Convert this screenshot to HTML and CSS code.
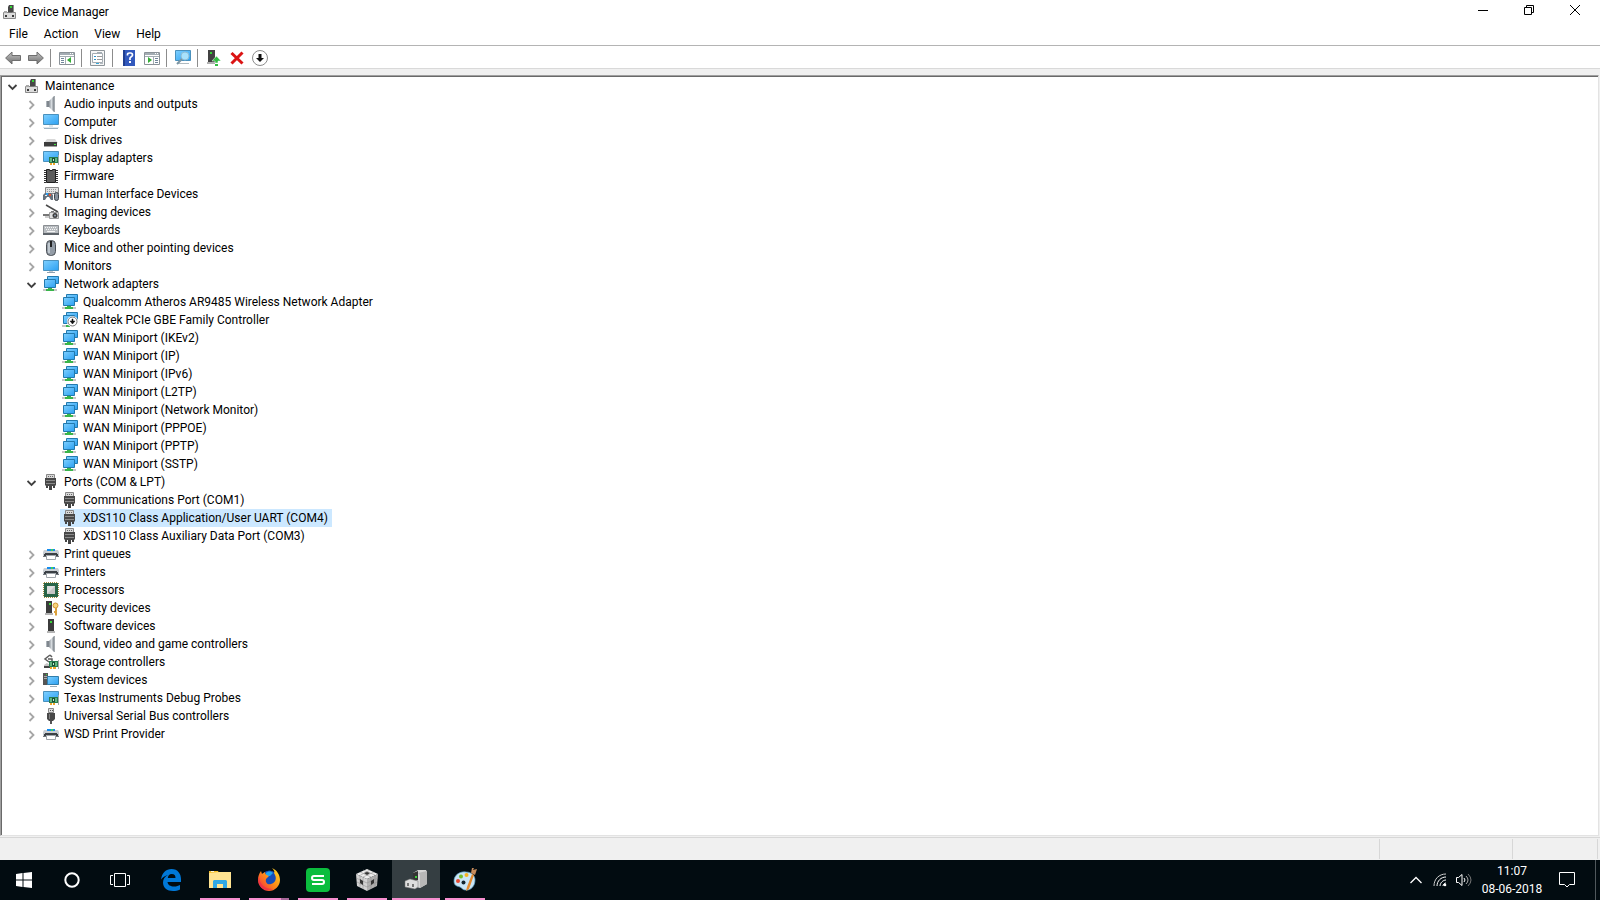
FILE: index.html
```html
<!DOCTYPE html>
<html lang="en">
<head>
    <meta charset="UTF-8">
    <meta name="viewport" content="width=device-width, initial-scale=1.0">
    <title>Device Manager</title>
    <link rel="stylesheet" href="styles.css">
</head>
<body>
    <!-- shared icon set, 16x16 grid -->
    <svg class="sprite" aria-hidden="true">
        <defs>
            <linearGradient id="screen" x1="0" y1="0" x2="1" y2="1">
                <stop offset="0" stop-color="#7fd0ff"/>
                <stop offset="1" stop-color="#2ba0f2"/>
            </linearGradient>
            <linearGradient id="metal" x1="0" y1="0" x2="1" y2="0">
                <stop offset="0" stop-color="#8b9299"/>
                <stop offset=".5" stop-color="#d5dade"/>
                <stop offset="1" stop-color="#7c838a"/>
            </linearGradient>
            <linearGradient id="arrow" x1="0" y1="0" x2="0" y2="1">
                <stop offset="0" stop-color="#c4c4c4"/>
                <stop offset="1" stop-color="#6e6e6e"/>
            </linearGradient>
            <linearGradient id="fox" x1="1" y1="0" x2="0" y2="1">
                <stop offset="0" stop-color="#ffe226"/>
                <stop offset=".5" stop-color="#ff8a16"/>
                <stop offset="1" stop-color="#f0204a"/>
            </linearGradient>
        </defs>

        <symbol id="i-right" viewBox="0 0 10 10"><path d="M2.500 1l4 4-4 4" fill="none" stroke="#a6a6a6" stroke-width="1.8"/></symbol>
        <symbol id="i-down" viewBox="0 0 10 10"><path d="M.5 3l4 4 4-4" fill="none" stroke="#404040" stroke-width="1.8"/></symbol>

        <symbol id="i-manager" viewBox="0 0 16 16">
            <path d="M7 1h5v8H6V3z" fill="#474747"/><path d="M11 1h1v8h-1z" fill="#8c8c8c"/><path d="M8 2h2v2H8z" fill="#35d435"/>
            <path d="M1.500 8.500h12v6h-12z" fill="#dcdcdc" stroke="#8a8a8a"/>
            <path d="M2 7h3v2H2z" fill="#a8a8a8"/><path d="M6 8h4v1H6z" fill="#777"/>
            <path d="M3 11h2v2H3zM10 11h2v2h-2z" fill="#3a3a3a"/>
        </symbol>
        <symbol id="i-speaker" viewBox="0 0 16 16">
            <path d="M3 5h3v6H3z" fill="#80878e"/><path d="M3 5h1v6H3z" fill="#adb4ba"/>
            <path d="M6 5l5-5v16l-5-5z" fill="url(#metal)"/><path d="M11 0h1v16h-1z" fill="#a3a9ae"/>
        </symbol>
        <symbol id="i-computer" viewBox="0 0 16 16">
            <path d="M.5.500h15v10H.500z" fill="url(#screen)" stroke="#4a91bd"/>
            <path d="M6 11h4v2H6z" fill="#dde6ea"/><path d="M1 14h14v1H1z" fill="#9fb3c2"/><path d="M0 13h16v1H0z" fill="#e0e8ed"/>
        </symbol>
        <symbol id="i-disk" viewBox="0 0 16 16">
            <path d="M4 7h8l3 4H1z" fill="#d8d8d8"/><path d="M1 10h13v4H1z" fill="#3d3d3d"/><path d="M1 14h13v1H1z" fill="#a0a0a0"/><path d="M11 12h2v1h-2z" fill="#45e045"/>
        </symbol>
        <symbol id="i-display" viewBox="0 0 16 16">
            <path d="M.5 1.500h15v10H.500z" fill="url(#screen)" stroke="#4a91bd"/>
            <path d="M6 7h9v6H6z" fill="#277c50"/><path d="M7 8h7v4H7z" fill="#63b680"/><path d="M9 8h3v4H9z" fill="#164e34"/><path d="M10 9h1v2h-1z" fill="#bdf0c9"/>
            <path d="M7 13h2v2H7zM10 13h2v2h-2z" fill="#eda72c"/><path d="M15 5h1v10h-1z" fill="#a0aaa5"/>
        </symbol>
        <symbol id="i-firmware" viewBox="0 0 16 16">
            <path d="M3.500 1.500h3v1h3v-1h3v13h-9z" fill="#5c5c5c" stroke="#202020"/>
            <path d="M2 2v13M14 2v13" stroke="#333" stroke-width="2" stroke-dasharray="1 1"/>
        </symbol>
        <symbol id="i-hid" viewBox="0 0 16 16">
            <path d="M2.500 1.500h13v6h-13z" fill="#e2e2e2" stroke="#888"/><path d="M4 3.500h10M4 5.500h10" stroke="#999" stroke-dasharray="1 1"/>
            <path d="M0 14V9l2-2h6l2 2v5H8l-2-3H4l-2 3z" fill="#65717d"/><path d="M3 7h2v2H3z" fill="#2b9cf0"/><path d="M6 8h2v2H6z" fill="#e85534"/><path d="M2 9h2v1H2z" fill="#eee"/>
            <rect x="11.500" y="6.500" width="4" height="8" rx="2" fill="#88929d" stroke="#3d444b"/>
        </symbol>
        <symbol id="i-imaging" viewBox="0 0 16 16">
            <path d="M3 1l12 7" stroke="#4b4b4b" stroke-width="1.500"/>
            <path d="M0 10h7v2H0z" fill="#777"/><path d="M2 12h5v2H2z" fill="#ccc"/>
            <path d="M6.500 8.500h9v6h-9z" fill="#e0e0e0" stroke="#999"/><circle cx="12" cy="11.500" r="2.500" fill="#3d3d3d"/><circle cx="12" cy="11.500" r="1" fill="#93a0b0"/><path d="M8 7h3v1H8z" fill="#777"/>
        </symbol>
        <symbol id="i-keyboard" viewBox="0 0 16 16">
            <path d="M.5 3.500h15v9H.500z" fill="#b9bdc1" stroke="#8a8e92"/><path d="M2 5.500h12M3 7.500h11" stroke="#f5f5f5" stroke-dasharray="1 1"/><path d="M4 9.500h8" stroke="#f5f5f5"/><path d="M0 11h16v2H0z" fill="#5e646a"/>
        </symbol>
        <symbol id="i-mouse" viewBox="0 0 16 16">
            <rect x="3.500" y=".5" width="9" height="15" rx="4" fill="#939ca6" stroke="#4a4f55"/><path d="M5 3h2v10H5z" fill="#c0c8cf"/><path d="M7 1h2v6H7z" fill="#222"/>
        </symbol>
        <symbol id="i-monitor" viewBox="0 0 16 16">
            <path d="M.5 2.500h15v10H.500z" fill="url(#screen)" stroke="#4a91bd"/><path d="M6 13h4v1H6z" fill="#c3cbd0"/><path d="M4 14h8v1H4z" fill="#8ca0b0"/>
        </symbol>
        <symbol id="i-network" viewBox="0 0 16 16">
            <path d="M0 13h14v2H0z" fill="#c6c6c6"/><path d="M3 13h8v2H3zM5 11h4v4H5z" fill="#38b54a"/>
            <path d="M4.500.500h11v7h-11z" fill="url(#screen)" stroke="#237aae"/><path d="M1.500 3.500h11v8h-11z" fill="url(#screen)" stroke="#237aae"/>
        </symbol>
        <symbol id="i-network-off" viewBox="0 0 16 16">
            <path d="M0 13h5v2H0z" fill="#c6c6c6"/><path d="M4 13h4v2H4z" fill="#38b54a"/>
            <path d="M4.500.500h11v7h-11z" fill="url(#screen)" stroke="#237aae"/><path d="M1.500 3.500h11v8h-11z" fill="url(#screen)" stroke="#237aae"/>
            <circle cx="10.500" cy="9.500" r="5.500" fill="#fff"/><circle cx="10.500" cy="9.500" r="4.500" fill="#fff" stroke="#777"/>
            <path d="M10 7h1v2h2l-2.500 3L8 9h2z" fill="#111" stroke="#111" stroke-width=".5"/>
        </symbol>
        <symbol id="i-port" viewBox="0 0 16 16">
            <path d="M3.500.500h8v4h-8z" fill="#d8d8d8" stroke="#888"/><path d="M5 2.500h6" stroke="#666" stroke-dasharray="1 1"/>
            <path d="M2 4h11v7l-1 1H3l-1-1z" fill="#484848"/><path d="M3 6h9v1H3zM3 9h9v1H3z" fill="#8a8a8a"/><path d="M3 12h2v2H3zM6 12h3v4H6zM10 12h2v2h-2z" fill="#444"/>
        </symbol>
        <symbol id="i-printer" viewBox="0 0 16 16">
            <path d="M1 4h14l1 2v5h-2v-1H2v1H0V6z" fill="#c9ced3"/>
            <path d="M4 3h8v2H4z" fill="#168cec"/><path d="M8 3h2v2H8z" fill="#42d152"/>
            <path d="M2 7h12v1h1v2h-2V9H3v1H1V8h1z" fill="#3b4045"/>
            <path d="M0 10h3v1H0zM13 10h3v1h-3z" fill="#6f757b"/>
            <path d="M3.500 9.500h9v4h-9z" fill="#fff" stroke="#9fa5aa"/>
        </symbol>
        <symbol id="i-cpu" viewBox="0 0 16 16">
            <path d="M1 .5h14M1 15.500h14M.5 1v14M15.500 1v14" stroke="#a18a3e" stroke-dasharray="1 1"/><path d="M1 1h14v14H1z" fill="#286447"/><path d="M4 4h8v8H4z" fill="#dedede"/><path d="M4 12l8-8v8z" fill="#c5c5c5"/>
        </symbol>
        <symbol id="i-security" viewBox="0 0 16 16">
            <path d="M3 1h6v12H3z" fill="#3b3b3b"/><path d="M2 13h8v2H2z" fill="#b5b5b5"/><path d="M6 3h2v2H6z" fill="#3ad63a"/>
            <circle cx="12.500" cy="5.500" r="2.500" fill="#f8d47d" stroke="#d29430"/><path d="M12 8h2v7l-1 1-1-1v-2h-1v-2h1z" fill="#dca13b"/>
        </symbol>
        <symbol id="i-software" viewBox="0 0 16 16">
            <path d="M5 1h6v12H5z" fill="#3b3b3b"/><path d="M4 13h8v2H4z" fill="#b5b5b5"/><path d="M7 3h2v2H7z" fill="#3ad63a"/>
        </symbol>
        <symbol id="i-storage" viewBox="0 0 16 16">
            <path d="M7 1L2 5l4 3M7 1l2 2M5 5h4v2" fill="none" stroke="#5e5e5e" stroke-width="1.500"/>
            <path d="M1 11l3-2 3 2v2H1z" fill="#c4c4c4"/><path d="M1 12h6v2H1z" fill="#444"/>
            <path d="M6 7h9v6H6z" fill="#277c50"/><path d="M7 8h7v4H7z" fill="#63b680"/><path d="M9 8h3v4H9z" fill="#164e34"/><path d="M10 9h1v2h-1z" fill="#bdf0c9"/>
            <path d="M7 13h2v2H7zM10 13h3v2h-3z" fill="#eda72c"/><path d="M15 6h1v9h-1z" fill="#aaa"/>
        </symbol>
        <symbol id="i-system" viewBox="0 0 16 16">
            <path d="M0 1h5v12H0z" fill="#555"/><path d="M1 4h3v1H1zM1 6h3v1H1z" fill="#aaa"/><path d="M3 2h1v1H3z" fill="#3ad63a"/>
            <path d="M4.500 4.500h11v8h-11z" fill="url(#screen)" stroke="#317eab"/><path d="M7 14h7v1H7z" fill="#9aabb6"/>
        </symbol>
        <symbol id="i-usb" viewBox="0 0 16 16">
            <path d="M5.500.500h5v4h-5z" fill="#ddd" stroke="#888"/><path d="M7 2h1v1H7zM9 2h1v1H9z" fill="#555"/>
            <path d="M4 5h8v6l-2 2H6l-2-2z" fill="#484848"/><path d="M6 6h1v5H6z" fill="#808080"/><path d="M7 13h2v3H7z" fill="#555"/>
        </symbol>

        <symbol id="i-back" viewBox="0 0 16 16"><path d="M.6 8L7 2v3.500h8.500v5H7V14z" fill="url(#arrow)" stroke="#6e6e6e"/></symbol>
        <symbol id="i-forward" viewBox="0 0 16 16"><path d="M15.400 8L9 2v3.500H.500v5H9V14z" fill="url(#arrow)" stroke="#6e6e6e"/></symbol>
        <symbol id="i-tree" viewBox="0 0 16 16">
            <path d="M.5 2.500h15v12H.500z" fill="#fff" stroke="#8b9298"/><path d="M1 3h14v2H1z" fill="#a4adb3"/><path d="M11 3h1v1h-1zM13 3h1v1h-1z" fill="#fff"/><path d="M1 6h14v1H1zM6 7h1v7H6z" fill="#a4adb3"/><path d="M2 8h3v1H2zM2 10h3v1H2zM2 12h3v1H2z" fill="#71869a"/><path d="M12 7v6L8 10z" fill="#35ad36"/>
        </symbol>
        <symbol id="i-action" viewBox="0 0 16 16">
            <path d="M.5 2.500h15v12H.500z" fill="#fff" stroke="#8b9298"/><path d="M1 3h14v2H1z" fill="#a4adb3"/><path d="M11 3h1v1h-1zM13 3h1v1h-1z" fill="#fff"/><path d="M1 6h14v1H1zM9 7h1v7H9z" fill="#a4adb3"/><path d="M11 8h3v1h-3zM11 10h3v1h-3zM11 12h3v1h-3z" fill="#71869a"/><path d="M4 7v6l4-3z" fill="#35ad36"/>
        </symbol>
        <symbol id="i-properties" viewBox="0 0 16 16">
            <path d="M.5.500h14v15H.500z" fill="#f6f6f6" stroke="#8d9499"/><path d="M2.500 3.500h10v9h-10z" fill="#fff" stroke="#a5adb3"/><path d="M7 2h5v2H7z" fill="#a5adb3"/><path d="M4 6h2v1H4zM4 9h2v1H4z" fill="#2d91c7"/><path d="M7 6h5v1H7zM7 9h5v1H7z" fill="#999"/><path d="M6 13h3v1H6z" fill="#36a9da"/><path d="M10 13h3v1h-3z" fill="#b2bac0"/>
        </symbol>
        <symbol id="i-help" viewBox="0 0 16 16">
            <path d="M2 0h12v16H2z" fill="#3259bd"/><path d="M2 0h2v16H2z" fill="#203f91"/>
            <path d="M6.500 5.500v-1q0-1.500 2-1.500h1q2 0 2 2 0 1-1 1.500L9 8v2" fill="none" stroke="#fff" stroke-width="1.700"/><path d="M8 11h2v2H8z" fill="#fff"/>
        </symbol>
        <symbol id="i-scan" viewBox="0 0 16 16">
            <path d="M.5.500h15v10H.500z" fill="url(#screen)" stroke="#4a91bd"/><path d="M2 13h12v1H2z" fill="#b0bac0"/>
            <circle cx="10" cy="6" r="4" fill="#a8e1fc" stroke="#8fbdd6"/><path d="M7 9l-5 5" stroke="#7b95a3" stroke-width="2"/>
        </symbol>
        <symbol id="i-update" viewBox="0 0 16 16">
            <path d="M2 0h7v12H2z" fill="#414141"/><path d="M1 12h8v2H1z" fill="#b0b0b0"/><path d="M4 2h2v2H4z" fill="#35d435"/><path d="M10.500 6L15 11h-3v2H9v-2H6z" fill="#31bc42" stroke="#fff" stroke-width=".5"/><path d="M9 14h3v2H9z" fill="#31bc42"/>
        </symbol>
        <symbol id="i-remove" viewBox="0 0 16 16"><path d="M2.500 3l11 10.500M13.500 2.500L2.500 13.500" stroke="#db1414" stroke-width="3"/></symbol>
        <symbol id="i-disable" viewBox="0 0 16 16"><circle cx="8" cy="8" r="7.500" fill="#fff" stroke="#8c8c8c"/><path d="M6.500 4h3v4H12l-4 4-4-4h2.500z" fill="#111"/></symbol>
    </svg>

    <main class="window">
        <header class="titlebar">
            <svg class="icon"><use href="#i-manager"/></svg>
            <h1>Device Manager</h1>
            <div class="controls">
                <button aria-label="Minimize"><svg class="glyph" viewBox="0 0 10 10"><path d="M0 5.500h10"/></svg></button>
                <button aria-label="Restore"><svg class="glyph" viewBox="0 0 10 10"><path d="M.5 2.500h7v7h-7zM2.500 2.500v-2h7v7h-2"/></svg></button>
                <button aria-label="Close"><svg class="glyph" viewBox="0 0 10 10"><path d="M0 0l10 10M10 0L0 10"/></svg></button>
            </div>
        </header>

        <nav class="menubar">
            <button>File</button>
            <button>Action</button>
            <button>View</button>
            <button>Help</button>
        </nav>

        <div class="toolbar">
            <button aria-label="Back"><svg class="icon"><use href="#i-back"/></svg></button>
            <button aria-label="Forward"><svg class="icon"><use href="#i-forward"/></svg></button>
            <span class="sep"></span>
            <button aria-label="Show console tree"><svg class="icon"><use href="#i-tree"/></svg></button>
            <span class="sep"></span>
            <button aria-label="Properties"><svg class="icon"><use href="#i-properties"/></svg></button>
            <span class="sep"></span>
            <button aria-label="Help topics"><svg class="icon"><use href="#i-help"/></svg></button>
            <button aria-label="Show action pane"><svg class="icon"><use href="#i-action"/></svg></button>
            <span class="sep"></span>
            <button aria-label="Scan for hardware changes"><svg class="icon"><use href="#i-scan"/></svg></button>
            <span class="sep"></span>
            <button aria-label="Update driver"><svg class="icon"><use href="#i-update"/></svg></button>
            <button aria-label="Uninstall device"><svg class="icon"><use href="#i-remove"/></svg></button>
            <button aria-label="Disable device"><svg class="icon"><use href="#i-disable"/></svg></button>
        </div>

        <section class="tree">
            <ul>
                <li>
                    <div class="row"><button class="toggle" aria-label="Collapse"><svg><use href="#i-down"/></svg></button><span class="item"><svg class="icon"><use href="#i-manager"/></svg>Maintenance</span></div>
                    <ul>
                        <li><div class="row"><button class="toggle" aria-label="Expand"><svg><use href="#i-right"/></svg></button><span class="item"><svg class="icon"><use href="#i-speaker"/></svg>Audio inputs and outputs</span></div></li>
                        <li><div class="row"><button class="toggle" aria-label="Expand"><svg><use href="#i-right"/></svg></button><span class="item"><svg class="icon"><use href="#i-computer"/></svg>Computer</span></div></li>
                        <li><div class="row"><button class="toggle" aria-label="Expand"><svg><use href="#i-right"/></svg></button><span class="item"><svg class="icon"><use href="#i-disk"/></svg>Disk drives</span></div></li>
                        <li><div class="row"><button class="toggle" aria-label="Expand"><svg><use href="#i-right"/></svg></button><span class="item"><svg class="icon"><use href="#i-display"/></svg>Display adapters</span></div></li>
                        <li><div class="row"><button class="toggle" aria-label="Expand"><svg><use href="#i-right"/></svg></button><span class="item"><svg class="icon"><use href="#i-firmware"/></svg>Firmware</span></div></li>
                        <li><div class="row"><button class="toggle" aria-label="Expand"><svg><use href="#i-right"/></svg></button><span class="item"><svg class="icon"><use href="#i-hid"/></svg>Human Interface Devices</span></div></li>
                        <li><div class="row"><button class="toggle" aria-label="Expand"><svg><use href="#i-right"/></svg></button><span class="item"><svg class="icon"><use href="#i-imaging"/></svg>Imaging devices</span></div></li>
                        <li><div class="row"><button class="toggle" aria-label="Expand"><svg><use href="#i-right"/></svg></button><span class="item"><svg class="icon"><use href="#i-keyboard"/></svg>Keyboards</span></div></li>
                        <li><div class="row"><button class="toggle" aria-label="Expand"><svg><use href="#i-right"/></svg></button><span class="item"><svg class="icon"><use href="#i-mouse"/></svg>Mice and other pointing devices</span></div></li>
                        <li><div class="row"><button class="toggle" aria-label="Expand"><svg><use href="#i-right"/></svg></button><span class="item"><svg class="icon"><use href="#i-monitor"/></svg>Monitors</span></div></li>
                        <li>
                            <div class="row"><button class="toggle" aria-label="Collapse"><svg><use href="#i-down"/></svg></button><span class="item"><svg class="icon"><use href="#i-network"/></svg>Network adapters</span></div>
                            <ul class="leaves">
                                <li class="row"><span class="item"><svg class="icon"><use href="#i-network"/></svg>Qualcomm Atheros AR9485 Wireless Network Adapter</span></li>
                                <li class="row"><span class="item"><svg class="icon"><use href="#i-network-off"/></svg>Realtek PCIe GBE Family Controller</span></li>
                                <li class="row"><span class="item"><svg class="icon"><use href="#i-network"/></svg>WAN Miniport (IKEv2)</span></li>
                                <li class="row"><span class="item"><svg class="icon"><use href="#i-network"/></svg>WAN Miniport (IP)</span></li>
                                <li class="row"><span class="item"><svg class="icon"><use href="#i-network"/></svg>WAN Miniport (IPv6)</span></li>
                                <li class="row"><span class="item"><svg class="icon"><use href="#i-network"/></svg>WAN Miniport (L2TP)</span></li>
                                <li class="row"><span class="item"><svg class="icon"><use href="#i-network"/></svg>WAN Miniport (Network Monitor)</span></li>
                                <li class="row"><span class="item"><svg class="icon"><use href="#i-network"/></svg>WAN Miniport (PPPOE)</span></li>
                                <li class="row"><span class="item"><svg class="icon"><use href="#i-network"/></svg>WAN Miniport (PPTP)</span></li>
                                <li class="row"><span class="item"><svg class="icon"><use href="#i-network"/></svg>WAN Miniport (SSTP)</span></li>
                            </ul>
                        </li>
                        <li>
                            <div class="row"><button class="toggle" aria-label="Collapse"><svg><use href="#i-down"/></svg></button><span class="item"><svg class="icon"><use href="#i-port"/></svg>Ports (COM &amp; LPT)</span></div>
                            <ul class="leaves">
                                <li class="row"><span class="item"><svg class="icon"><use href="#i-port"/></svg>Communications Port (COM1)</span></li>
                                <li class="row"><span class="item selected"><svg class="icon"><use href="#i-port"/></svg>XDS110 Class Application/User UART (COM4)</span></li>
                                <li class="row"><span class="item"><svg class="icon"><use href="#i-port"/></svg>XDS110 Class Auxiliary Data Port (COM3)</span></li>
                            </ul>
                        </li>
                        <li><div class="row"><button class="toggle" aria-label="Expand"><svg><use href="#i-right"/></svg></button><span class="item"><svg class="icon"><use href="#i-printer"/></svg>Print queues</span></div></li>
                        <li><div class="row"><button class="toggle" aria-label="Expand"><svg><use href="#i-right"/></svg></button><span class="item"><svg class="icon"><use href="#i-printer"/></svg>Printers</span></div></li>
                        <li><div class="row"><button class="toggle" aria-label="Expand"><svg><use href="#i-right"/></svg></button><span class="item"><svg class="icon"><use href="#i-cpu"/></svg>Processors</span></div></li>
                        <li><div class="row"><button class="toggle" aria-label="Expand"><svg><use href="#i-right"/></svg></button><span class="item"><svg class="icon"><use href="#i-security"/></svg>Security devices</span></div></li>
                        <li><div class="row"><button class="toggle" aria-label="Expand"><svg><use href="#i-right"/></svg></button><span class="item"><svg class="icon"><use href="#i-software"/></svg>Software devices</span></div></li>
                        <li><div class="row"><button class="toggle" aria-label="Expand"><svg><use href="#i-right"/></svg></button><span class="item"><svg class="icon"><use href="#i-speaker"/></svg>Sound, video and game controllers</span></div></li>
                        <li><div class="row"><button class="toggle" aria-label="Expand"><svg><use href="#i-right"/></svg></button><span class="item"><svg class="icon"><use href="#i-storage"/></svg>Storage controllers</span></div></li>
                        <li><div class="row"><button class="toggle" aria-label="Expand"><svg><use href="#i-right"/></svg></button><span class="item"><svg class="icon"><use href="#i-system"/></svg>System devices</span></div></li>
                        <li><div class="row"><button class="toggle" aria-label="Expand"><svg><use href="#i-right"/></svg></button><span class="item"><svg class="icon"><use href="#i-display"/></svg>Texas Instruments Debug Probes</span></div></li>
                        <li><div class="row"><button class="toggle" aria-label="Expand"><svg><use href="#i-right"/></svg></button><span class="item"><svg class="icon"><use href="#i-usb"/></svg>Universal Serial Bus controllers</span></div></li>
                        <li><div class="row"><button class="toggle" aria-label="Expand"><svg><use href="#i-right"/></svg></button><span class="item"><svg class="icon"><use href="#i-printer"/></svg>WSD Print Provider</span></div></li>
                    </ul>
                </li>
            </ul>
        </section>

        <footer class="statusbar">
            <span class="pane main"></span>
            <span class="pane wide"></span>
            <span class="pane"></span>
        </footer>
    </main>

    <div class="taskbar">
        <button class="sys" aria-label="Start"><svg width="16" height="16" viewBox="0 0 16 16" fill="#fff"><path d="M0 2l6.500-1v6.500H0zM7.500 1L16 0v7.500H7.500zM0 8.500h6.500V15L0 14zM7.500 8.500H16V16l-8.500-1z"/></svg></button>
        <button class="sys" aria-label="Search"><svg width="16" height="16" viewBox="0 0 16 16"><circle cx="8" cy="8" r="6.700" fill="none" stroke="#fff" stroke-width="2"/></svg></button>
        <button class="sys" aria-label="Task view"><svg width="20" height="16" viewBox="0 0 20 16" fill="none" stroke="#fff"><path d="M4.500 1.500h11v13h-11zM3 3.500H.500v9H3M17 3.500h2.500v9H17"/></svg></button>
        <div class="apps">
            <button aria-label="Edge">
                <svg width="24" height="24" viewBox="0 0 24 24"><path d="M2 11.500C3 5 7 1 12.500 1 19 1 22 6 22 11v3H8.500c.3 3 3 4.500 6.500 4.500 2.500 0 4.500-.6 6-1.500v4.500c-2 1-4.500 1.500-7 1.500-6 0-10-3.500-10-8.500 0-3.500 2-6.200 5-7.500-3 .5-5.500 2.500-7 4.500zM8.800 10h7.700c0-2.500-1-4-3.700-4s-3.800 1.700-4 4z" fill="#0078d7"/></svg>
            </button>
            <button class="open" aria-label="File Explorer">
                <svg width="24" height="24" viewBox="0 0 24 24"><path d="M1 3h9l1 2H1z" fill="#f3bd28"/><path d="M3 3h3v1H3z" fill="#fff5d5"/><path d="M1 5l10-1h12v16H1z" fill="#ffe391"/><path d="M5 20v-7l1-1h12l1 1v7h-4v-4H9v4z" fill="#2fa7e4"/></svg>
            </button>
            <button class="open grouped" aria-label="Firefox">
                <svg width="24" height="24" viewBox="0 0 24 24"><circle cx="12.500" cy="11.500" r="9" fill="#164db8"/><path d="M9 5c2-2 5-2 7 0l-3 3H9z" fill="#1da5ef"/><path d="M15 0c5 2 8 7 8 12 0 6-5 11-11 11S1 18 1 12c0-4 1-6 3-9l1 3 3-2c0 2 1 3 4 4l-3 3c-1 4 2 6 5 5 4-1 6-5 4-9l-1-2c1-1 0-3-2-5z" fill="url(#fox)"/><path d="M2 9c1 8 6 12 14 12-9 4-17-4-14-12z" fill="#ec284c" opacity=".65"/></svg>
            </button>
            <button class="open" aria-label="Spreadsheets">
                <svg width="24" height="24" viewBox="0 0 24 24"><rect width="24" height="24" rx="4" fill="#0bbd3e"/><path d="M18 8H8q-2 0-2 2t2 2h8q2 0 2 2t-2 2H6" fill="none" stroke="#fff" stroke-width="2"/></svg>
            </button>
            <button class="open" aria-label="Code Composer">
                <svg width="24" height="24" viewBox="0 0 24 24"><path d="M12 1l11 5-11 5L1 6z" fill="#eee"/><path d="M1 6l11 5v12L2 18z" fill="#d2d2d2"/><path d="M23 6l-11 5v12l10-5z" fill="#b0b0b0"/><path d="M5 4l11 5M8 2l12 5M8 9l11-5M4 8l11-6M1 10l11 5 11-5M2 14l10 5 10-5M5 8v11M8 9v12M16 9v12M20 7v12" fill="none" stroke="#8a8a8a" stroke-width=".5"/><path d="M9 5l3-1 3 1-3 2zM5 11l3 2v4l-3-2zM16 13l3-2v4l-3 2z" fill="#343434"/></svg>
            </button>
            <button class="open active" aria-label="Device Manager">
                <svg width="24" height="24" viewBox="0 0 24 24"><path d="M9 5l5-3h8l1 2v12l-7 4-7-2z" fill="#d7d7d7"/><path d="M9 5l5-2v9l-5 2z" fill="#343434"/><path d="M14 5l9-2v13l-7 4V7z" fill="#b7b7b7"/><path d="M11 8h2v2h-2z" fill="#3bcf3b"/><path d="M1 13l5-2 8 2v6l-3 2-10-2z" fill="#dedede" stroke="#777" stroke-width=".5"/><path d="M3 15h2v3H3zM8 16h2v3H8z" fill="#777"/></svg>
            </button>
            <button class="open" aria-label="Paint">
                <svg width="24" height="24" viewBox="0 0 24 24"><path d="M1 13C1 7 7 3 13 4c6 0 9 4 9 8 0 6-4 11-10 10-2 0-3-2-5-3-4-1-6-2-6-6z" fill="#cae5f5" stroke="#5c9fc4" stroke-width=".7"/><circle cx="5" cy="13" r="2" fill="#e64a32"/><circle cx="8" cy="8.500" r="2" fill="#75bd2d"/><circle cx="13.500" cy="7" r="2" fill="#f5b323"/><circle cx="10.500" cy="14.500" r="2" fill="#12242d"/><path d="M19 6l2 1-5 14-3 2 1-4z" fill="#e48a2e"/><path d="M18 5l1-5h2l-1 2 4-1-2 6z" fill="#c88c5b"/></svg>
            </button>
        </div>

        <div class="tray">
            <button class="small" aria-label="Show hidden icons"><svg width="12" height="12" viewBox="0 0 12 12"><path d="M.5 9L6 3.500 11.500 9" fill="none" stroke="#fff" stroke-width="1.300"/></svg></button>
            <button class="small" aria-label="Network"><svg width="14" height="14" viewBox="0 0 14 14" fill="none" stroke="#ccc"><path d="M1 13C1 6 6 1 13 1"/><path d="M4 13c0-5 4-9 9-9M7 13c0-3 3-6 6-6" stroke="#fff"/><path d="M10 13c0-1.500 1.500-3 3-3" stroke="#fff"/><circle cx="12" cy="12" r="1.300" fill="#fff" stroke="none"/></svg></button>
            <button class="small" aria-label="Volume"><svg width="16" height="14" viewBox="0 0 16 14" fill="none" stroke="#fff"><path d="M.5 4.500h2l3.500-3v11l-3.500-3h-2zM8 5q2 2 0 4"/><path d="M10 3q4 4 0 8" stroke="#aaa"/><path d="M12 1q6 6 0 12" stroke="#777"/></svg></button>
            <button class="clock"><span>11:07</span><span>08-06-2018</span></button>
            <button class="notify" aria-label="Notifications"><svg width="16" height="16" viewBox="0 0 16 16"><path d="M.5.500h15v12h-5L8 15l-2.500-2.500h-5z" fill="none" stroke="#fff"/></svg></button>
            <button class="desktop" aria-label="Show desktop"></button>
        </div>
    </div>
</body>
</html>
```
FILE: styles.css
```css
* {
    box-sizing: border-box;
}
body {
    margin: 0;
    height: 100vh;
    display: flex;
    flex-direction: column;
    overflow: hidden;
    font-family: "Segoe UI", Roboto, "Open Sans", sans-serif;
    font-size: 12px;
    line-height: 18px;
    color: #000;
    background-color: #f0f0f0;
}
button {
    display: flex;
    align-items: center;
    justify-content: center;
    margin: 0;
    padding: 0;
    border: 0;
    background: none;
    font: inherit;
    color: inherit;
}
ul {
    list-style: none;
    margin: 0;
    padding: 0;
}
svg {
    display: block;
    flex: none;
}
.sprite {
    position: absolute;
    width: 0;
    height: 0;
}
.icon {
    width: 16px;
    height: 16px;
}

/* window */
.window {
    flex: 1;
    min-height: 0;
    display: flex;
    flex-direction: column;
}
.titlebar {
    display: flex;
    align-items: center;
    height: 23px;
    padding: 0 2px;
    background-color: #fff;
}
.titlebar h1 {
    margin: 0 0 0 5px;
    font-size: 12px;
    font-weight: normal;
}
.controls {
    display: flex;
    align-self: flex-start;
    margin-left: auto;
}
.controls button {
    width: 46px;
    height: 20px;
}
.glyph {
    width: 10px;
    height: 10px;
    fill: none;
    stroke: #000;
}
.menubar {
    display: flex;
    gap: 16px;
    height: 23px;
    padding: 0 9px;
    background-color: #fff;
    border-bottom: 1px solid #b4b4b4;
}
.toolbar {
    display: flex;
    align-items: center;
    height: 23px;
    padding: 2px 0 0 1px;
    background-color: #fff;
    border-bottom: 1px solid #d9d9d9;
}
.toolbar button {
    width: 23px;
    height: 20px;
}
.sep {
    width: 8px;
    height: 18px;
    padding-left: 3px;
}
.sep::before {
    content: "";
    display: block;
    width: 1px;
    height: 18px;
    background-color: #8c8c8c;
}

/* device tree */
.tree {
    flex: 1;
    min-height: 0;
    margin: 6px 1px 1px 0;
    overflow: hidden;
    background-color: #fff;
    border-style: solid;
    border-width: 1px;
    border-color: #a0a0a0 #e3e3e3 #e3e3e3 #a0a0a0;
}
.tree > ul {
    height: 100%;
    padding-left: 2px;
    border-top: 1px solid #696969;
    border-left: 1px solid #696969;
}
.tree ul ul {
    padding-left: 19px;
}
.tree .leaves {
    padding-left: 37px;
}
.row {
    display: flex;
    height: 18px;
}
.toggle {
    width: 18px;
    height: 20px;
}
.toggle svg {
    width: 10px;
    height: 10px;
}
.item {
    display: flex;
    align-items: center;
    gap: 5px;
    padding: 0 4px 0 2px;
    white-space: nowrap;
}
.selected {
    background-color: #cce8ff;
}

.statusbar {
    display: flex;
    height: 23px;
    padding: 1px 2px 1px 0;
    border-top: 1px solid #d7d7d7;
}
.pane {
    width: 85px;
    border-right: 1px solid #d7d7d7;
}
.pane.wide {
    width: 133px;
}
.pane.main {
    flex: 1;
}

/* taskbar */
.taskbar {
    display: flex;
    height: 40px;
    background-color: #020c11;
    color: #fff;
}
.sys {
    width: 48px;
}
.apps {
    display: flex;
    gap: 1px;
    margin-left: 3px;
}
.apps button {
    position: relative;
    width: 48px;
}
.open::after {
    content: "";
    position: absolute;
    left: 4px;
    right: 4px;
    bottom: 0;
    height: 2px;
    background-color: #f78fd0;
}
.grouped::after {
    border-right: 8px solid #a8689a;
}
.apps .active {
    background-color: #353e42;
}
.active::after {
    left: 0;
    right: 0;
}
.tray {
    display: flex;
    margin-left: auto;
}
.small {
    width: 24px;
}
.clock {
    width: 72px;
    flex-direction: column;
}
.notify {
    width: 38px;
    margin-right: 9px;
}
.desktop {
    width: 5px;
    border-left: 1px solid #50585c;
}
```
